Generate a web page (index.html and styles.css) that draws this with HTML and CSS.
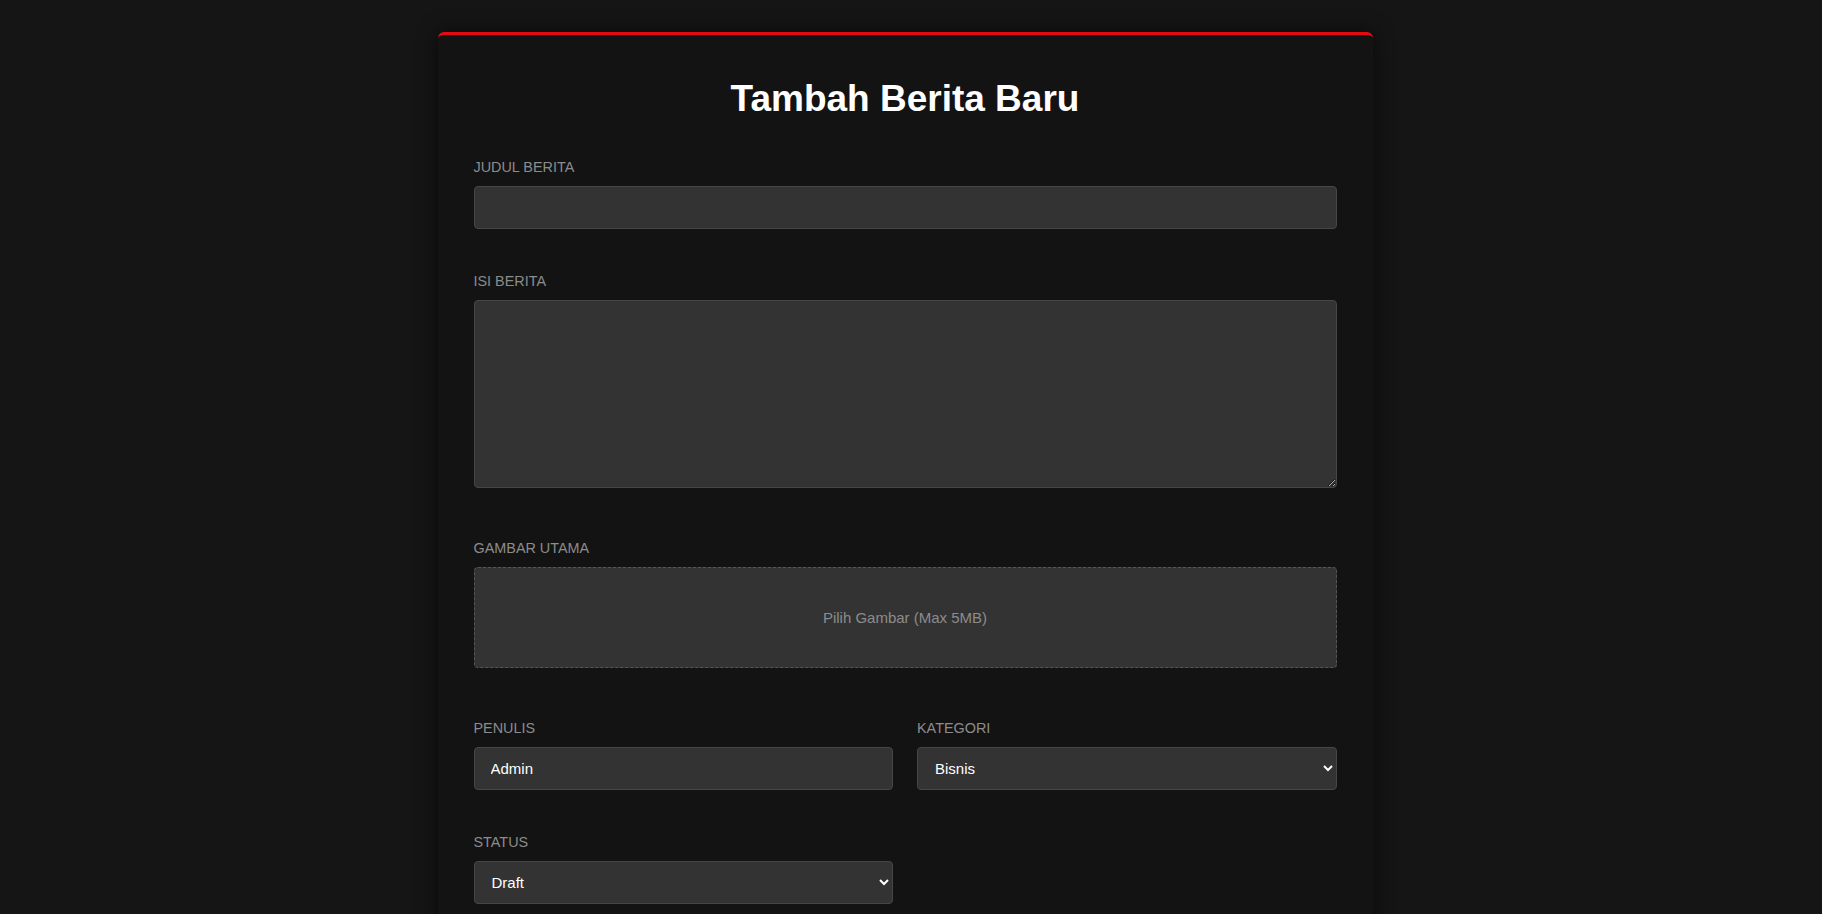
FILE: index.html
```html
<!DOCTYPE html>
<html lang="id">
<head>
<meta charset="utf-8">
<title>Tambah Berita Baru</title>
<link rel="stylesheet" href="styles.css">
</head>
<body>
<main class="page">
  <section class="card">
    <h1 class="title">Tambah Berita Baru</h1>
    <form class="form">
      <div class="group">
        <label class="label" for="judul">Judul Berita</label>
        <input class="field" id="judul" type="text">
      </div>
      <div class="group group-tall">
        <label class="label" for="isi">Isi Berita</label>
        <textarea class="field area" id="isi"></textarea>
      </div>
      <div class="group group-tall">
        <span class="label">Gambar Utama</span>
        <div class="upload">Pilih Gambar (Max 5MB)</div>
      </div>
      <div class="row">
        <div class="group">
          <label class="label" for="penulis">Penulis</label>
          <input class="field" id="penulis" type="text" value="Admin">
        </div>
        <div class="group">
          <label class="label" for="kategori">Kategori</label>
          <select class="field select" id="kategori">
            <option>Bisnis</option>
            <option>Teknologi</option>
            <option>Olahraga</option>
          </select>
        </div>
        <div class="group">
          <label class="label" for="status">Status</label>
          <select class="field select" id="status">
            <option>Draft</option>
            <option>Publish</option>
          </select>
        </div>
      </div>
    </form>
  </section>
</main>
</body>
</html>
```

FILE: styles.css
```css
html {
  color-scheme: dark;
}

body {
  margin: 0;
  background: #151515;
  font-family: "Liberation Sans", Arial, sans-serif;
  color: #fff;
}

.page {
  display: flex;
  justify-content: center;
  padding: 32px 12px 0 0;
}

.card {
  width: 935px;
  box-sizing: border-box;
  background: #131313;
  border-top: 3px solid #e50914;
  border-radius: 6px;
  box-shadow: 0 0 20px rgba(0, 0, 0, 0.6);
  padding: 43px 36px 60px;
}

.title {
  margin: 0 0 39px;
  text-align: center;
  font-size: 37px;
  font-weight: 700;
  line-height: normal;
  color: #fff;
}

.form {
  display: flex;
  flex-direction: column;
}

.group {
  display: flex;
  flex-direction: column;
  margin-bottom: 44px;
}

.group-tall {
  margin-bottom: 52px;
}

.label {
  display: block;
  margin-bottom: 11px;
  font-size: 14.4px;
  line-height: normal;
  text-transform: uppercase;
  color: #8c8c8c;
}

.field {
  box-sizing: border-box;
  height: 43px;
  width: 100%;
  margin: 0;
  padding: 0 16px;
  background: #333;
  border: 1px solid #464646;
  border-radius: 4px;
  color: #fff;
  font-family: "Liberation Sans", Arial, sans-serif;
  font-size: 15px;
  font-weight: 500;
  outline: none;
}

.select {
  padding: 0 18px 0 13px;
}

.area {
  display: block;
  height: 188px;
  padding: 12px 16px;
  resize: vertical;
}

.upload {
  box-sizing: border-box;
  height: 101px;
  display: flex;
  align-items: center;
  justify-content: center;
  background: #333;
  border: 1px dashed #555;
  border-radius: 4px;
  color: #8c8c8c;
  font-size: 15px;
}

.row {
  display: grid;
  grid-template-columns: 1fr 1fr;
  column-gap: 24px;
}
```
